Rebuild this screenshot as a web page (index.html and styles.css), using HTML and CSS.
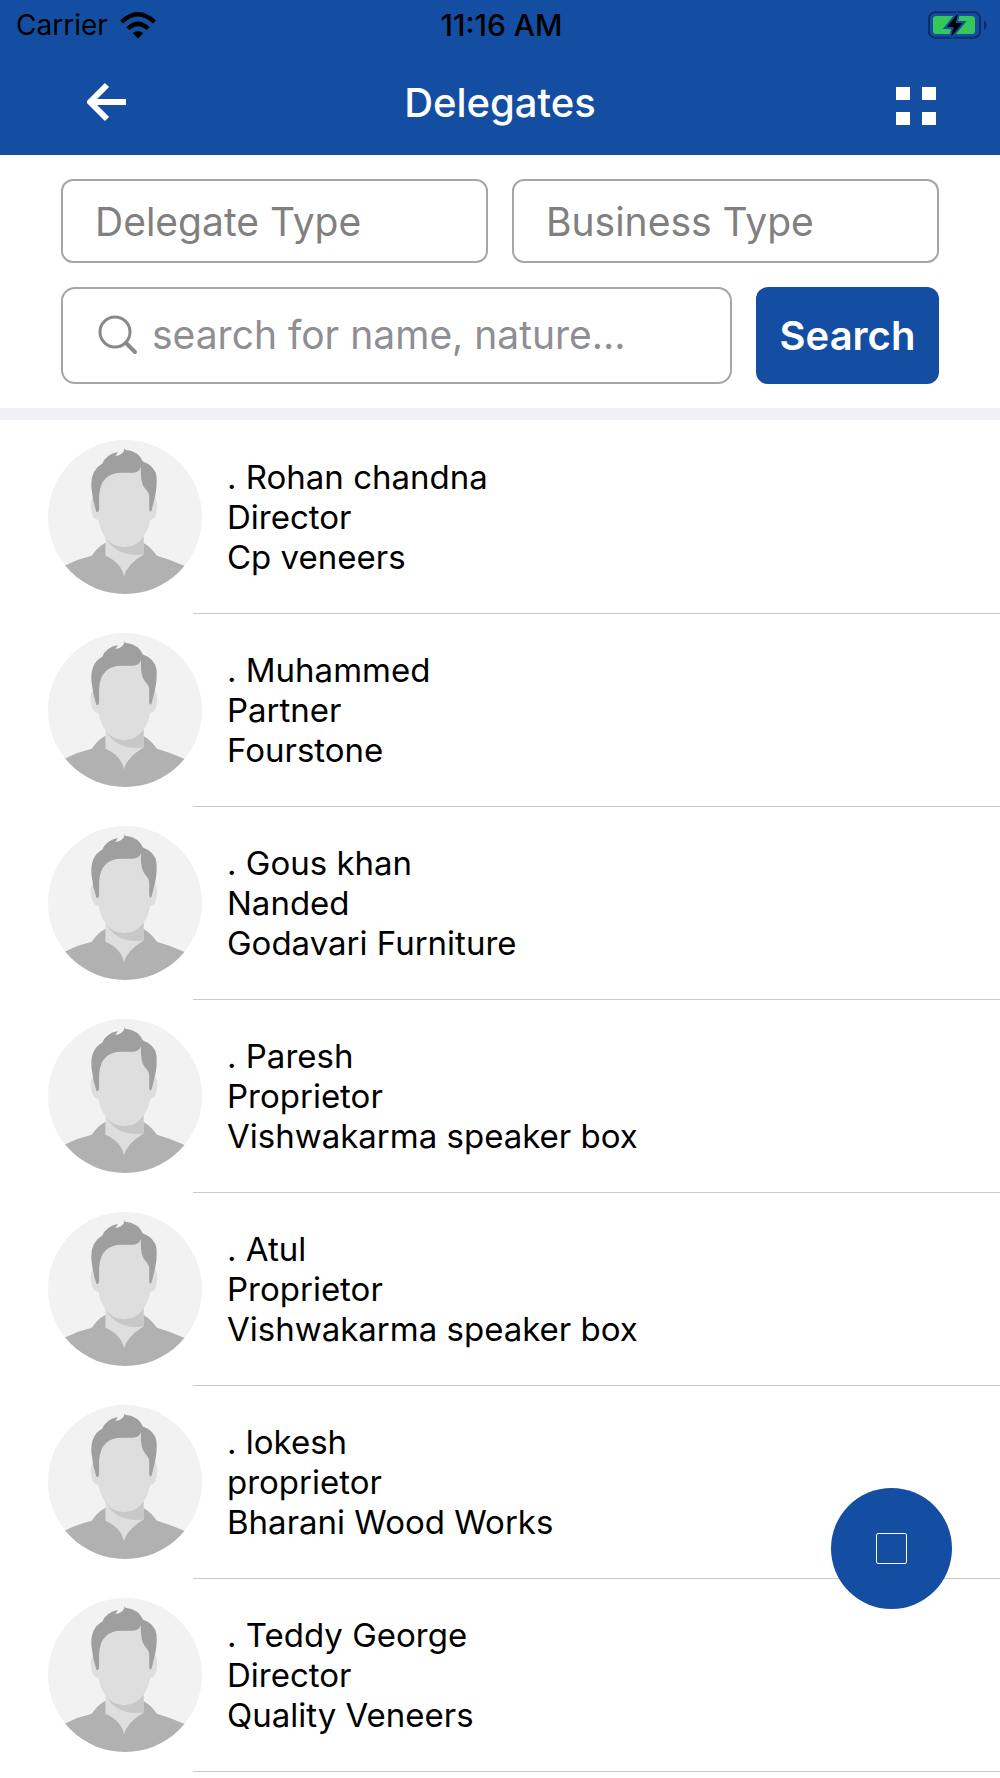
FILE: index.html
```html
<!DOCTYPE html>
<html lang="en">

<head>
  <meta charset="UTF-8">
  <meta name="viewport" content="width=device-width, initial-scale=1.0">
  <title>Delegates</title>
  <link rel="stylesheet" href="styles.css">
</head>

<body>
  <!-- avatar shared by every row -->
  <svg class="sprite" aria-hidden="true">
    <symbol id="avatar" viewBox="55 59 464 464">
      <clipPath id="avatar-clip">
        <circle cx="287" cy="291" r="232" />
      </clipPath>
      <g clip-path="url(#avatar-clip)">
        <rect x="55" y="59" width="464" height="464" fill="#f2f2f2" />
        <path fill="#b1b1b1" d="M40 475 Q75 445 108 436 Q148 417 187 408 Q202 383 227 369 L343 369 Q368 384 383 408 Q425 420 465 438 Q500 450 530 475 V530 H40 Z" />
        <path fill="#dedede" d="M228 345 H343 V404 Q291 436 284 470 Q276 429 228 408 Z" />
        <path fill="#c8c8c8" d="M228 352 Q284 402 343 350 V404 Q262 414 228 352 Z" />
        <path fill="#dedede" d="M190 232 Q182 244 184 262 Q188 300 207 300 Q216 351 249 372 Q285 392 320 372 Q354 350 363 300 Q381 300 384 262 Q385 244 379 232 L350 145 H215 Z" />
        <path fill="#9f9f9f" d="M201 276 Q208 278 209 266 V226 Q214 157 278 158 H312 Q328 157 335 142 Q333 190 348 206 Q360 218 360 230 V268 Q361 277 366 274 Q370 262 378 226 Q384 202 382 170 Q378 137 341 124 Q329 93 288 88 L286 84 Q279 98 265 104 L268 93 L259 98 L264 95 Q228 104 219 130 Q181 151 186 205 Q190 244 201 276 Z" />
        <path fill="#f2f2f2" d="M286 86 Q281 104 258 107 L265 97 Q262 94 258 96 L263 90 Z" />
      </g>
    </symbol>
  </svg>

  <header class="header">
    <div class="status">
      <div class="carrier">
        <span>Carrier</span>
        <svg class="wifi" viewBox="0 0 110 82" aria-hidden="true">
          <path d="M0 26 Q55 -26 110 26 L101 35 Q55 -8 9 35 Z" />
          <path d="M19 46 Q55 12 91 46 L81 55 Q55 31 29 55 Z" />
          <path d="M39 65 Q55 51 71 65 L55 81 Z" />
        </svg>
      </div>
      <time class="clock">11:16 AM</time>
      <svg class="battery" viewBox="0 0 177 84" role="img" aria-label="Charging">
        <rect x="3" y="4" width="153" height="76" rx="18" fill="none" stroke="#0d2f62" stroke-width="6" />
        <path fill="#0d2f62" d="M168 27 Q177 34 177 42 Q177 50 168 57 Z" />
        <rect x="15" y="15" width="126" height="54" rx="10" fill="#34c759" />
        <path fill="#000" stroke="#134ea2" stroke-width="12" paint-order="stroke" d="M90 7 L57 48 H77 L69 78 L103 36 H83 Z" />
      </svg>
    </div>
    <div class="navbar">
      <button class="nav-btn" aria-label="Back">
        <svg viewBox="0 0 40 42" aria-hidden="true">
          <path d="M21 3 L4 20 L21 37 M4 20 H40" fill="none" stroke="#fff" stroke-width="6" stroke-linejoin="round" />
        </svg>
      </button>
      <h1>Delegates</h1>
      <button class="nav-btn menu" aria-label="Menu">
        <span></span><span></span><span></span><span></span>
      </button>
    </div>
  </header>

  <form class="filters">
    <div class="types">
      <select aria-label="Delegate Type">
        <option>Delegate Type</option>
      </select>
      <select aria-label="Business Type">
        <option>Business Type</option>
      </select>
    </div>
    <div class="search">
      <label class="search-box">
        <svg viewBox="0 0 40 40" aria-hidden="true">
          <circle cx="17" cy="17" r="15" />
          <path d="M28 28 L37 37" />
        </svg>
        <input type="text" aria-label="Search for name, nature" placeholder="search for name, nature...">
      </label>
      <button class="search-btn" type="button">Search</button>
    </div>
  </form>

  <ul class="delegates">
    <li>
      <div class="delegate">
        <svg class="avatar"><use href="#avatar" /></svg>
        <div class="info">
          <p>. Rohan chandna</p>
          <p>Director</p>
          <p>Cp veneers</p>
        </div>
      </div>
    </li>
    <li>
      <div class="delegate">
        <svg class="avatar"><use href="#avatar" /></svg>
        <div class="info">
          <p>. Muhammed</p>
          <p>Partner</p>
          <p>Fourstone</p>
        </div>
      </div>
    </li>
    <li>
      <div class="delegate">
        <svg class="avatar"><use href="#avatar" /></svg>
        <div class="info">
          <p>. Gous khan</p>
          <p>Nanded</p>
          <p>Godavari Furniture</p>
        </div>
      </div>
    </li>
    <li>
      <div class="delegate">
        <svg class="avatar"><use href="#avatar" /></svg>
        <div class="info">
          <p>. Paresh</p>
          <p>Proprietor</p>
          <p>Vishwakarma speaker box</p>
        </div>
      </div>
    </li>
    <li>
      <div class="delegate">
        <svg class="avatar"><use href="#avatar" /></svg>
        <div class="info">
          <p>. Atul</p>
          <p>Proprietor</p>
          <p>Vishwakarma speaker box</p>
        </div>
      </div>
    </li>
    <li>
      <div class="delegate">
        <svg class="avatar"><use href="#avatar" /></svg>
        <div class="info">
          <p>. lokesh</p>
          <p>proprietor</p>
          <p>Bharani Wood Works</p>
        </div>
      </div>
    </li>
    <li>
      <div class="delegate">
        <svg class="avatar"><use href="#avatar" /></svg>
        <div class="info">
          <p>. Teddy George</p>
          <p>Director</p>
          <p>Quality Veneers</p>
        </div>
      </div>
    </li>
  </ul>

  <button class="fab" aria-label="Scan">
    <span></span>
  </button>
</body>

</html>
```

FILE: styles.css
```css
* {
  box-sizing: border-box;
}

body {
  margin: 0;
  background: #fff;
  color: #000;
  font-family: Inter, "Liberation Sans", sans-serif;
  font-size: 33px;
}

button,
select,
input {
  margin: 0;
  padding: 0;
  border: none;
  background: none;
  font: inherit;
}

button {
  cursor: pointer;
}

.sprite {
  position: absolute;
  width: 0;
  height: 0;
}

/* header */
.header {
  background: #134ea2;
}

.status,
.navbar {
  display: grid;
  grid-template-columns: 1fr auto 1fr;
  align-items: center;
}

.status {
  height: 50px;
  padding: 0 13px 0 16px;
  font-size: 28px;
}

.carrier {
  display: flex;
  align-items: center;
  gap: 12px;
}

.wifi {
  width: 36px;
  height: 27px;
}

.clock {
  font-size: 30px;
  font-weight: 500;
}

.battery {
  justify-self: end;
  width: 59px;
  height: 28px;
}

.navbar {
  height: 105px;
  padding: 0 64px;
}

.navbar h1 {
  margin: 0;
  color: #fff;
  font-size: 40px;
  font-weight: 500;
}

.nav-btn {
  width: 40px;
  height: 42px;
  margin-left: 22px;
}

.nav-btn svg {
  display: block;
  width: 40px;
  height: 42px;
}

.menu {
  display: grid;
  grid-template-columns: 14px 14px;
  grid-template-rows: 13px 13px;
  gap: 12px;
  align-content: end;
  justify-content: end;
  justify-self: end;
  height: 44px;
}

.menu span {
  background: #fff;
}

/* filters */
.filters {
  display: flex;
  flex-direction: column;
  gap: 24px;
  padding: 24px 61px;
  border-bottom: 12px solid #f1f0f5;
  font-size: 39px;
}

.types {
  display: grid;
  grid-template-columns: 1fr 1fr;
  gap: 24px;
}

.types select {
  height: 84px;
  padding: 0 32px;
  border: 2px solid #a6a6a6;
  border-radius: 12px;
  appearance: none;
  color: #808080;
}

.search {
  display: flex;
  gap: 24px;
  height: 97px;
}

.search-box {
  display: flex;
  flex: 1;
  align-items: center;
  gap: 14px;
  min-width: 0;
  padding: 0 32px 2px 35px;
  border: 2px solid #a6a6a6;
  border-radius: 14px;
}

.search-box svg {
  flex: none;
  width: 40px;
  height: 40px;
  fill: none;
  stroke: #8a8a8e;
  stroke-width: 3;
  stroke-linecap: round;
}

.search-box path {
  stroke-width: 4;
}

.search-box input {
  flex: 1;
  min-width: 0;
  outline: none;
}

.search-box input::placeholder {
  color: #8e8e93;
  opacity: 1;
}

.search-btn {
  width: 183px;
  border-radius: 12px;
  background: #134ea2;
  color: #fff;
  font-size: 40px;
  font-weight: 600;
}

/* list */
.delegates {
  margin: 0;
  padding: 1px 0 0;
  list-style: none;
}

.delegates li::after {
  content: '';
  display: block;
  height: 1px;
  margin-left: 193px;
  background: #c8c8cc;
}

.delegate {
  display: flex;
  align-items: center;
  gap: 25px;
  padding: 19px 48px;
}

.avatar {
  flex: none;
  width: 154px;
  height: 154px;
}

.info p {
  margin: 0;
  line-height: 40px;
}

/* floating button */
.fab {
  position: fixed;
  right: 48px;
  bottom: 169px;
  display: flex;
  align-items: center;
  justify-content: center;
  width: 121px;
  height: 121px;
  border-radius: 50%;
  background: #134ea2;
}

.fab span {
  width: 31px;
  height: 31px;
  border: 1px solid #fff;
  border-radius: 2px;
}
```
